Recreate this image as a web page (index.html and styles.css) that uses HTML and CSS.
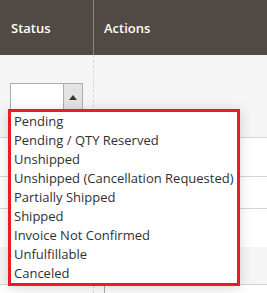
FILE: index.html
```html
<!DOCTYPE html>
<html lang="en">
<head>
    <meta charset="UTF-8">
    <title>Orders grid - status filter</title>
    <link rel="stylesheet" href="styles.css">
</head>
<body>
    <div class="grid">
        <div class="grid-head">
            <div class="th col-status">Status</div>
            <div class="th col-actions">Actions</div>
        </div>

        <div class="grid-row filters">
            <div class="cell col-status">
                <div class="select-wrap">
                    <div class="select">
                        <span class="select-value"></span>
                        <span class="select-arrow">
                            <svg width="8" height="5" viewBox="0 0 8 5"><path d="M0 5 L4 0 L8 5 Z" fill="#41362f"/></svg>
                        </span>
                    </div>
                    <ul class="options">
                        <li>Pending</li>
                        <li>Pending / QTY Reserved</li>
                        <li>Unshipped</li>
                        <li>Unshipped (Cancellation Requested)</li>
                        <li>Partially Shipped</li>
                        <li>Shipped</li>
                        <li>Invoice Not Confirmed</li>
                        <li>Unfulfillable</li>
                        <li>Canceled</li>
                    </ul>
                </div>
            </div>
            <div class="cell col-actions"></div>
        </div>

        <div class="grid-row row-a">
            <div class="cell col-status"></div>
            <div class="cell col-actions"></div>
        </div>
        <div class="grid-row row-b">
            <div class="cell col-status"></div>
            <div class="cell col-actions"></div>
        </div>
        <div class="grid-row row-c no-line">
            <div class="cell col-status"></div>
            <div class="cell col-actions"></div>
        </div>
        <div class="grid-row row-d striped">
            <div class="cell col-status"></div>
            <div class="cell col-actions"></div>
        </div>
        <div class="grid-row row-e">
            <div class="cell col-status"></div>
            <div class="cell col-actions split"></div>
        </div>
    </div>
</body>
</html>
```

FILE: styles.css
```css
body {
    margin: 0;
    font-family: "Open Sans", "Liberation Sans", sans-serif;
    color: #303030;
    background-color: #fff;
}
.grid {
    width: 267px;
    overflow: hidden;
}
.grid-head {
    display: flex;
    height: 55px;
    background-color: #514943;
}
.th {
    display: flex;
    align-items: center;
    color: #fff;
    font-size: 13px;
    font-weight: 600;
    padding-left: 11px;
}
.grid-head .col-status {
    border-right: 1px solid #8a837f;
}
.col-status {
    width: 93px;
    flex-shrink: 0;
    box-sizing: border-box;
}
.th.col-status {
    width: 94px;
}
.col-actions {
    flex-grow: 1;
}
.th.col-actions {
    padding-left: 10px;
}
.grid-row {
    display: flex;
    border-bottom: 1px solid #d6d6d6;
}
.grid-row .col-status {
    width: 94px;
    border-right: 1px dashed #d6d6d6;
}
.grid-row.no-line {
    border-bottom: none;
}
.filters {
    height: 82px;
    background-color: #f5f5f5;
}
.filters .cell.col-status {
    padding: 28px 0 0 10px;
}
.row-a {
    height: 38px;
}
.row-b {
    height: 31px;
}
.row-c {
    height: 38px;
}
.striped {
    height: 37px;
    background-color: #f5f5f5;
}
.row-e {
    height: 20px;
    border-bottom: none;
}
.split {
    margin-left: 10px;
    border-left: 1px solid #adadad;
}
.select-wrap {
    position: relative;
    width: 73px;
}
.select {
    display: flex;
    height: 32px;
    border: 1px solid #adadad;
    background-color: #fff;
    box-sizing: border-box;
}
.select-value {
    flex-grow: 1;
}
.select-arrow {
    width: 19px;
    border-left: 1px solid #adadad;
    background-color: #e3e3e3;
    display: flex;
    justify-content: center;
    padding-top: 11px;
    box-sizing: border-box;
}
.select-arrow svg {
    display: block;
}
.options {
    position: absolute;
    top: 26px;
    left: -2px;
    width: 232px;
    margin: 0;
    padding: 0 0 0 3px;
    list-style: none;
    background-color: #fff;
    border: 3px solid #ed1c24;
    box-sizing: border-box;
    box-shadow: 0 2px 12px rgba(0, 0, 0, 0.16);
    z-index: 2;
}
.options li {
    font-size: 13px;
    line-height: 19px;
    color: #303030;
    white-space: nowrap;
}
```
